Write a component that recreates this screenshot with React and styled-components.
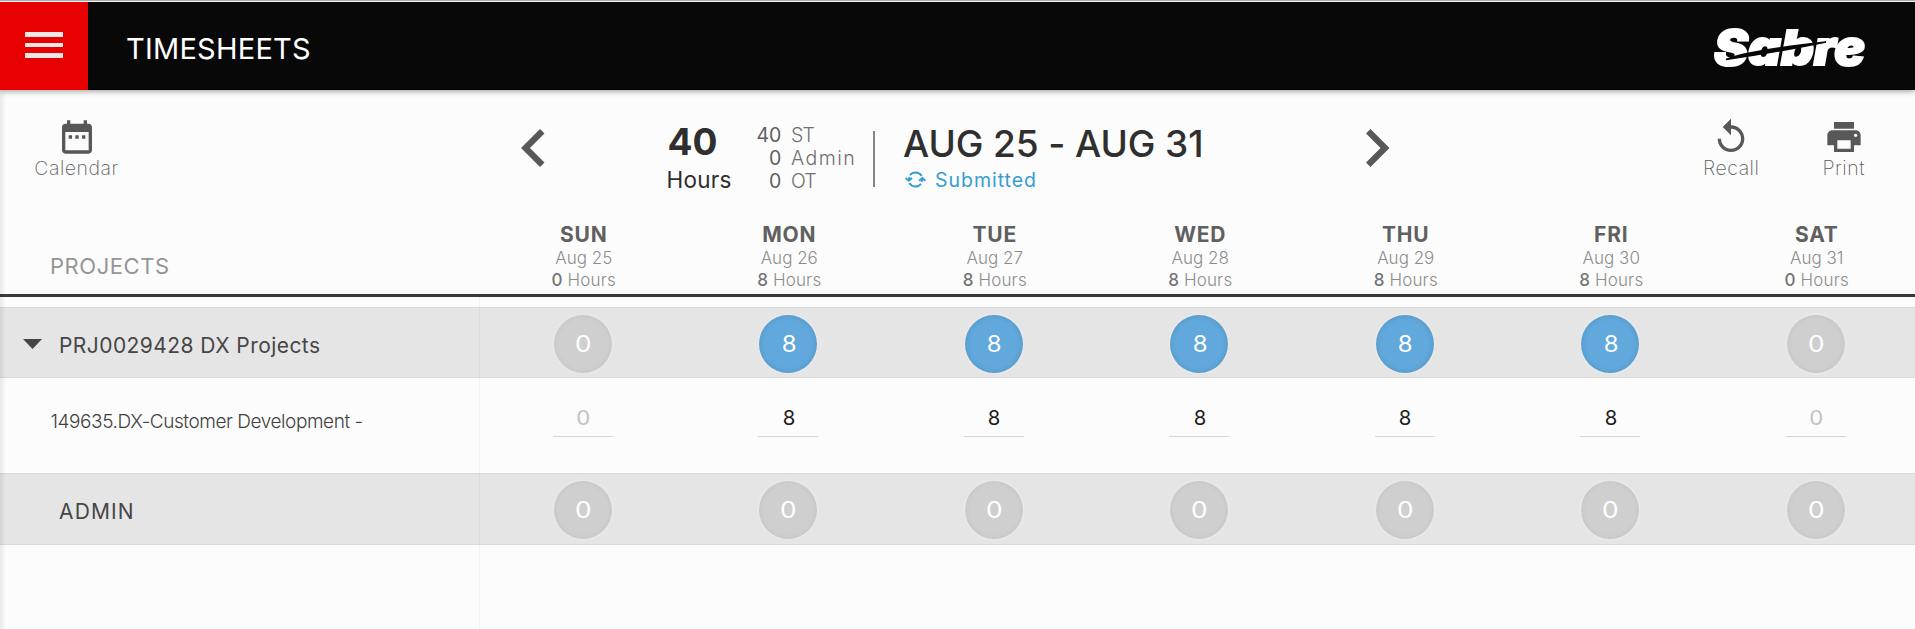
import React from "react";
import styled, { createGlobalStyle, css } from "styled-components";

const GlobalStyle = createGlobalStyle`
  * { box-sizing: border-box; }
  body {
    margin: 0;
    overflow: hidden;
    background: #fcfcfc;
    font-family: Inter, "Liberation Sans", sans-serif;
  }
`;

const Page = styled.div`
  position: relative;
  display: flex;
  flex-direction: column;
  width: 1915px;
  height: 629px;
  overflow: hidden;
  background: #fcfcfc;
`;

const EdgeShadow = styled.div`
  position: absolute;
  top: 90px;
  bottom: 0;
  left: 0;
  width: 6px;
  background: linear-gradient(to right, rgba(0, 0, 0, 0.08), rgba(0, 0, 0, 0));
`;

const Header = styled.header`
  display: flex;
  flex: none;
  align-items: stretch;
  height: 90px;
  border-top: 1px solid #adadad;
  background: #080808;
  box-shadow: inset 0 1px 0 #f4f4f4, inset 0 -1px 0 #000, 0 1px 6px rgba(0, 0, 0, 0.4);
  z-index: 1;
`;

const MenuButton = styled.button`
  display: flex;
  flex-direction: column;
  align-items: center;
  gap: 6px;
  width: 88px;
  margin-top: 1px;
  padding: 30px 0 0;
  border: 0;
  background: #e60000;
`;

const MenuBar = styled.span`
  width: 38.5px;
  height: 4.6px;
  background: #efe6e6;
`;

const Title = styled.h1`
  flex: 1;
  margin: 0 0 0 38px;
  padding-top: 3px;
  color: #fff;
  font-size: 29px;
  font-weight: 400;
  line-height: 89px;
  letter-spacing: 0.24px;
`;

const Logo = styled.svg`
  width: 156px;
  height: 44px;
  margin: 24px 47px 0 0;
  overflow: visible;
`;

const Toolbar = styled.section`
  display: flex;
  flex: none;
  height: 132px;
`;

const ToolButton = styled.button`
  display: flex;
  flex-direction: column;
  align-items: center;
  width: ${(p) => p.$width}px;
  padding: 27px 0 0;
  border: 0;
  background: none;
  color: #585858;
  font: 200 19.5px/22px Inter, "Liberation Sans", sans-serif;
  letter-spacing: 0.5px;

  span { color: #5c5c5c; }
`;

const ToolIcon = styled.svg`
  display: block;
  width: 40px;
  height: 40px;
  fill: currentColor;
`;

const LeftTools = styled.div`
  display: flex;
  width: 521px;
  padding-left: 26.5px;
`;

const RightTools = styled.div`
  display: flex;
  margin-left: auto;
  padding-right: 15px;
`;

const Chevron = styled.svg`
  flex: none;
  width: 23.5px;
  height: 38px;
  margin-top: 39px;
  fill: #585858;
`;

const TotalHours = styled.div`
  width: 64px;
  margin: 32.5px 0 0 122px;
  color: #2f2f2f;
  font-size: 22.5px;
  line-height: 37px;
  white-space: nowrap;
  letter-spacing: 0.25px;

  strong {
    display: block;
    padding-left: 1px;
    font-size: 37px;
    line-height: 38px;
    letter-spacing: 0;
  }
`;

const Breakdown = styled.dl`
  display: grid;
  grid-template-columns: 25px 82px;
  grid-auto-rows: 23px;
  column-gap: 10px;
  margin: 34px 0 0 25.5px;
  font-size: 19.5px;
  line-height: 23px;
  color: #6f6f6f;

  dt { text-align: right; color: #5f5f5f; letter-spacing: -0.2px; }
  dd { margin: 0; font-weight: 300; letter-spacing: ${(p) => p.$spacing || "0.7px"}; }
`;

const BreakdownLabel = styled.dd`
  && { letter-spacing: ${(p) => (p.$tight ? -0.9 : 1.5)}px; }
`;

const Divider = styled.div`
  width: 2px;
  height: 56px;
  margin-top: 41px;
  background: #858585;
`;

const Period = styled.div`
  width: 463px;
  margin: 33.5px 0 0 28px;
`;

const PeriodRange = styled.h2`
  margin: 0;
  color: #2f2f2f;
  font-size: 37px;
  font-weight: 500;
  line-height: 40px;
  letter-spacing: -0.1px;
`;

const Status = styled.div`
  display: flex;
  align-items: center;
  gap: 9px;
  padding-left: 2px;
  color: #369dd2;
  font-size: 19.5px;
  line-height: 33px;
  letter-spacing: 0.98px;
`;

const StatusIcon = styled.svg`
  width: 21px;
  height: 17px;
  margin-top: -2px;
  fill: none;
  stroke: currentColor;
  stroke-width: 1.9;
`;

const cellRow = css`
  display: grid;
  grid-template-columns: 480px repeat(7, 205.5px);
`;

const DayHeader = styled.div`
  ${cellRow}
  flex: none;
  height: 75px;
  border-bottom: 3px solid #3b393b;
`;

const ProjectsLabel = styled.div`
  padding: 33px 0 0 50px;
  color: #959595;
  font-size: 22px;
  line-height: 22px;
  letter-spacing: 0.55px;
`;

const Day = styled.div`
  display: flex;
  flex-direction: column;
  align-items: center;
  padding-left: 2px;
  color: #8c8c8c;
  font-size: 17px;
  font-weight: 300;
  line-height: 22px;
`;

const DayName = styled.strong`
  color: #606060;
  font-size: 21px;
  font-weight: 700;
  line-height: 25px;
  letter-spacing: 0.8px;
`;

const DayHours = styled.span`
  letter-spacing: 0.16px;
  b { font-weight: 500; color: #757575; }
`;

const Body = styled.div`
  display: flex;
  flex: 1;
  flex-direction: column;
`;

const Row = styled.div`
  ${cellRow}
  flex: none;
  height: ${(p) => p.$height}px;
`;

const GroupRow = styled(Row)`
  border: solid #d8d8d8;
  border-width: 1px 0;
  background: #e5e5e5;
`;

const RestRow = styled(Row)`
  flex: 1;
`;

const NameCell = styled.div`
  display: flex;
  align-items: center;
  border-right: 1px solid rgba(0, 0, 0, 0.035);
  white-space: nowrap;
`;

const GroupName = styled(NameCell)`
  padding: ${(p) => (p.$collapsible ? "6px 0 0 23px" : "5px 0 0 59px")};
  gap: 17px;
  color: #464646;
  font-size: 21px;
  letter-spacing: ${(p) => (p.$collapsible ? 0.44 : 1.15)}px;
`;

const Caret = styled.svg`
  width: 19px;
  height: 10px;
  margin-top: -3px;
  fill: #464646;
`;

const TaskName = styled(NameCell)`
  padding: 0 0 9px 50.5px;
  color: #404040;
  font-size: 19px;
  font-weight: 300;
  letter-spacing: -0.43px;
`;

const BubbleCell = styled.div`
  display: flex;
  justify-content: center;
  padding-top: 7px;
`;

const Bubble = styled.div`
  width: 58px;
  height: 58px;
  padding-left: 1px;
  border-radius: 50%;
  background: ${(p) => (p.$filled ? "#61a8dc" : "#cfcfcf")};
  box-shadow: inset 0 0 6px rgba(0, 0, 0, ${(p) => (p.$filled ? 0.12 : 0.05)}), 0 0 3px 1px rgba(255, 255, 255, 0.25);
  color: #fff;
  font-size: 23px;
  line-height: 59px;
  text-align: center;
`;

const Digit = styled.span`
  display: inline-block;
  transform: scaleX(${(p) => (p.$value === 0 ? 1.14 : 1.04)});
`;

const EntryCell = styled.div`
  display: flex;
  justify-content: center;
  align-items: flex-start;
  padding-top: 27px;
`;

const Entry = styled.div`
  width: 60px;
  height: 32px;
  padding-left: 1px;
  border-bottom: 1px solid #d5d5d5;
  color: ${(p) => (p.$empty ? "#c2c2c2" : "#1c1c1c")};
  font-size: 19.5px;
  line-height: 26px;
  text-align: center;
`;

const days = [
  ["SUN", "Aug 25", 0],
  ["MON", "Aug 26", 8],
  ["TUE", "Aug 27", 8],
  ["WED", "Aug 28", 8],
  ["THU", "Aug 29", 8],
  ["FRI", "Aug 30", 8],
  ["SAT", "Aug 31", 0],
];

const Bubbles = ({ values }) =>
  values.map((value, i) => (
    <BubbleCell key={i}>
      <Bubble $filled={value > 0}>
        <Digit $value={value}>{value}</Digit>
      </Bubble>
    </BubbleCell>
  ));

const Tool = ({ label, path, width }) => (
  <ToolButton $width={width}>
    <ToolIcon viewBox="0 0 24 24"><path d={path} /></ToolIcon>
    <span>{label}</span>
  </ToolButton>
);

const icons = {
  calendar:
    "M9 11H7v2h2v-2zm4 0h-2v2h2v-2zm4 0h-2v2h2v-2zm2-7h-1V2h-2v2H8V2H6v2H5c-1.11 0-1.99.9-1.99 2L3 20c0 1.1.89 2 2 2h14c1.1 0 2-.9 2-2V6c0-1.1-.9-2-2-2zm0 16H5V9h14v11z",
  recall:
    "M12 5V1L7 6l5 5V7c3.31 0 6 2.69 6 6s-2.69 6-6 6-6-2.69-6-6H4c0 4.42 3.58 8 8 8s8-3.58 8-8-3.58-8-8-8z",
  print:
    "M19 8H5c-1.66 0-3 1.34-3 3v6h4v4h12v-4h4v-6c0-1.66-1.34-3-3-3zm-3 11H8v-5h8v5zm3-7c-.55 0-1-.45-1-1s.45-1 1-1 1 .45 1 1-.45 1-1 1zm-1-9H6v4h12V3z",
};

export default function App() {
  const hours = days.map((d) => d[2]);
  return (
    <Page>
      <GlobalStyle />
      <Header>
        <MenuButton aria-label="Menu">
          <MenuBar />
          <MenuBar />
          <MenuBar />
        </MenuButton>
        <Title>TIMESHEETS</Title>
        <Logo viewBox="0 0 156 44" role="img" aria-label="Sabre">
          <text
            x="2"
            y="40"
            textLength="151"
            lengthAdjust="spacingAndGlyphs"
            fontFamily="Inter, sans-serif"
            fontWeight="900"
            fontStyle="italic"
            fontSize="48"
            fill="#fff"
            stroke="#fff"
            strokeWidth="2"
          >
            Sabre
          </text>
          <path d="M14 34.5 C30 28 60 23 114 17 C90 22 60 28 14 34.5Z" fill="#080808" stroke="#080808" strokeWidth="1.4" />
        </Logo>
      </Header>
      <EdgeShadow />
      <Toolbar>
        <LeftTools>
          <Tool label="Calendar" path={icons.calendar} width={100} />
        </LeftTools>
        <Chevron viewBox="8 6 7.41 12"><path d="M15.41 7.41 14 6l-6 6 6 6 1.41-1.41L10.83 12z" /></Chevron>
        <TotalHours>
          <strong>40</strong>Hours
        </TotalHours>
        <Breakdown>
          <dt>40</dt><BreakdownLabel $tight>ST</BreakdownLabel>
          <dt>0</dt><BreakdownLabel>Admin</BreakdownLabel>
          <dt>0</dt><BreakdownLabel $tight>OT</BreakdownLabel>
        </Breakdown>
        <Divider />
        <Period>
          <PeriodRange>AUG 25 - AUG 31</PeriodRange>
          <Status>
            <StatusIcon viewBox="0 0 21 17">
              <path d="M5 4.2A7 7 0 0 1 16.6 5M16 12.8A7 7 0 0 1 4.4 12" />
              <path d="M.6 7 3.8 9.8 7 7M20.4 9.8 17.4 7 14 9.8M3.8 9.5 4.4 6M17.4 8 16.6 11" />
            </StatusIcon>
            Submitted
          </Status>
        </Period>
        <Chevron viewBox="8.59 6 7.41 12"><path d="M10 6 8.59 7.41 13.17 12l-4.58 4.59L10 18l6-6z" /></Chevron>
        <RightTools>
          <Tool label="Recall" path={icons.recall} width={112.5} />
          <Tool label="Print" path={icons.print} width={112.5} />
        </RightTools>
      </Toolbar>
      <DayHeader>
        <ProjectsLabel>PROJECTS</ProjectsLabel>
        {days.map(([name, date, total]) => (
          <Day key={name}>
            <DayName>{name}</DayName>
            <span>{date}</span>
            <DayHours><b>{total}</b> Hours</DayHours>
          </Day>
        ))}
      </DayHeader>
      <Body>
        <Row $height={10}><NameCell /></Row>
        <GroupRow $height={71}>
          <GroupName $collapsible>
            <Caret viewBox="0 0 19 10"><path d="M0 0h19L9.5 10z" /></Caret>
            PRJ0029428 DX Projects
          </GroupName>
          <Bubbles values={hours} />
        </GroupRow>
        <Row $height={95}>
          <TaskName>149635.DX-Customer Development -</TaskName>
          {hours.map((value, i) => (
            <EntryCell key={i}>
              <Entry $empty={value === 0}>
                <Digit $value={value}>{value}</Digit>
              </Entry>
            </EntryCell>
          ))}
        </Row>
        <GroupRow $height={72}>
          <GroupName>ADMIN</GroupName>
          <Bubbles values={days.map(() => 0)} />
        </GroupRow>
        <RestRow><NameCell /></RestRow>
      </Body>
    </Page>
  );
}
